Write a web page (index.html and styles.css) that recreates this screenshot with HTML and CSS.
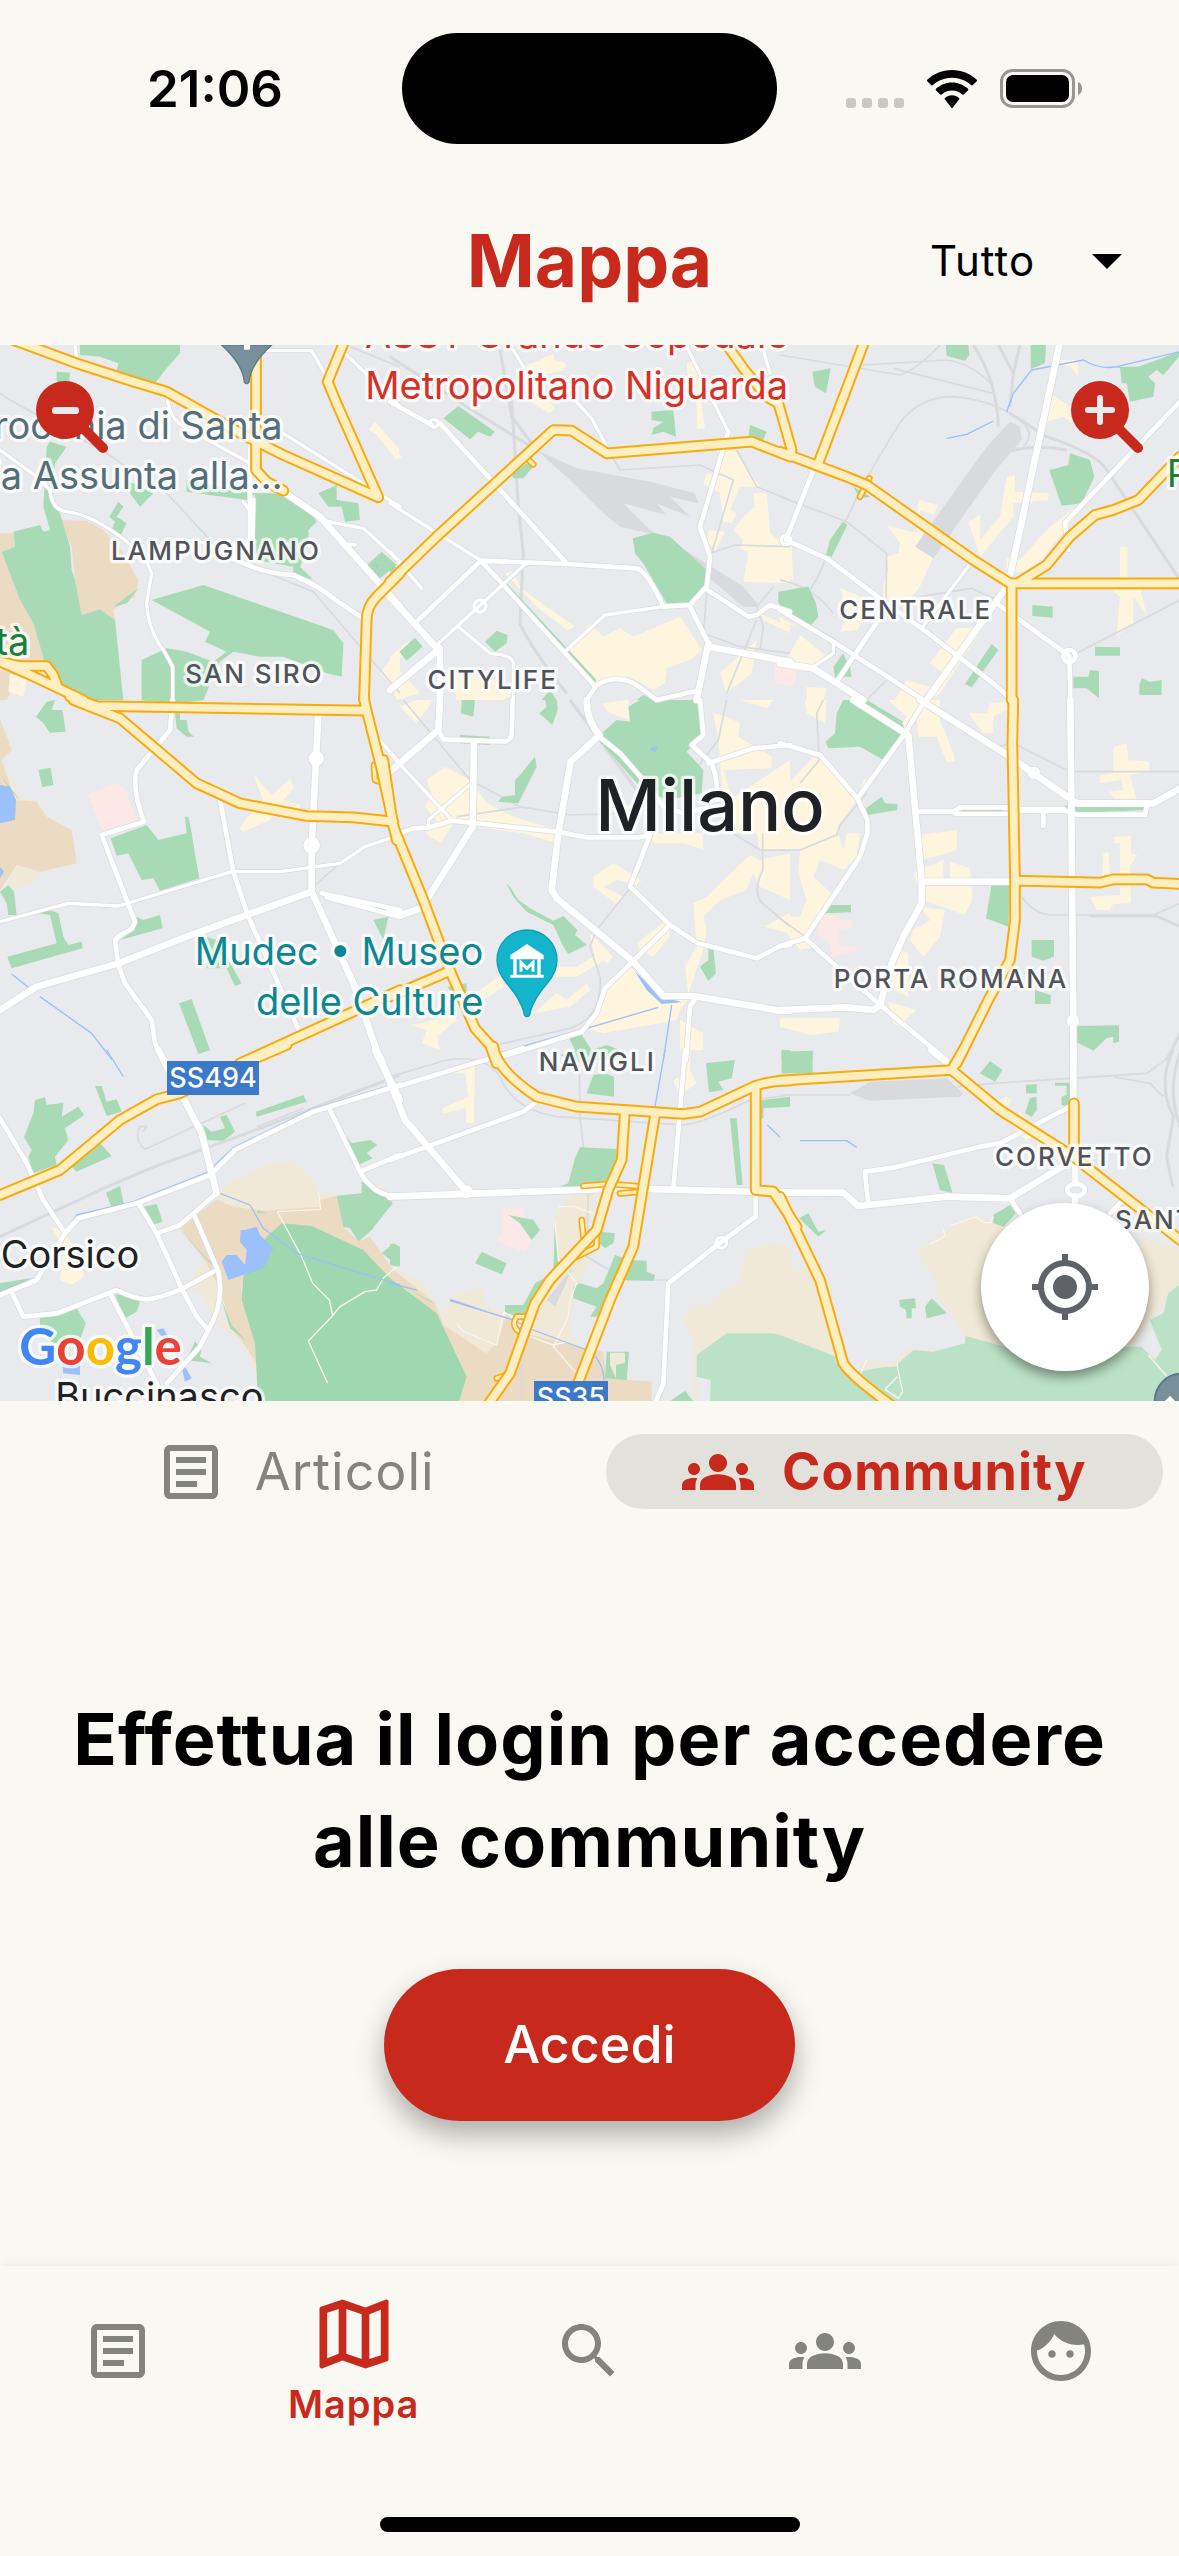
FILE: index.html
```html
<!DOCTYPE html>
<html lang="it">
<head>
<meta charset="utf-8">
<meta name="viewport" content="width=device-width, initial-scale=1">
<title>Mappa</title>
<link rel="stylesheet" href="styles.css">
</head>
<body>
<svg class="sprite" aria-hidden="true">
  <symbol id="i-article" viewBox="0 0 24 24"><path d="M19 5v14H5V5h14m0-2H5c-1.100 0-2 .9-2 2v14c0 1.100.9 2 2 2h14c1.100 0 2-.9 2-2V5c0-1.100-.9-2-2-2z"/><path d="M14 17H7v-2h7v2zm3-4H7v-2h10v2zm0-4H7V7h10v2z"/></symbol>
  <symbol id="i-map" viewBox="0 0 24 24"><path d="M20.500 3l-.16.030L15 5.100 9 3 3.360 4.900c-.21.070-.36.250-.36.480V20.500c0 .28.220.5.500.5l.16-.03L9 18.900l6 2.100 5.640-1.900c.21-.07.360-.25.360-.48V3.500c0-.28-.22-.5-.5-.5zM10 5.470l4 1.400v11.660l-4-1.400V5.470zm-5 .99l3-1.010v11.700l-3 1.160V6.460zm14 11.080l-3 1.010V6.860l3-1.160v11.840z"/></symbol>
  <symbol id="i-search" viewBox="0 0 24 24"><path d="M15.500 14h-.79l-.28-.27C15.410 12.590 16 11.110 16 9.500 16 5.910 13.090 3 9.500 3S3 5.910 3 9.500 5.910 16 9.500 16c1.610 0 3.090-.59 4.230-1.570l.27.28v.79l5 4.990L20.490 19l-4.990-5zm-6 0C7.010 14 5 11.990 5 9.500S7.010 5 9.500 5 14 7.010 14 9.500 11.990 14 9.500 14z"/></symbol>
  <symbol id="i-groups" viewBox="0 0 24 24"><path d="M12 12.750c1.630 0 3.070.39 4.240.9 1.080.48 1.760 1.560 1.760 2.730V18H6v-1.610c0-1.180.68-2.260 1.760-2.730 1.170-.52 2.610-.91 4.240-.91zM4 13c1.100 0 2-.9 2-2s-.9-2-2-2-2 .9-2 2 .9 2 2 2zm1.130 1.100c-.37-.06-.74-.1-1.130-.1-.99 0-1.930.21-2.780.58C.48 14.900 0 15.620 0 16.430V18h4.500v-1.610c0-.83.23-1.610.63-2.290zM20 13c1.100 0 2-.9 2-2s-.9-2-2-2-2 .9-2 2 .9 2 2 2zm4 3.430c0-.81-.48-1.530-1.220-1.850-.85-.37-1.790-.58-2.780-.58-.39 0-.76.040-1.130.1.400.68.630 1.460.63 2.290V18H24v-1.570zM12 6c1.660 0 3 1.340 3 3s-1.340 3-3 3-3-1.340-3-3 1.340-3 3-3z"/></symbol>
  <symbol id="i-face" viewBox="0 0 24 24"><path d="M10.250 13c0 .69-.56 1.250-1.250 1.250S7.750 13.690 7.750 13s.56-1.250 1.250-1.250 1.250.56 1.250 1.250zM15 11.750c-.69 0-1.250.56-1.250 1.250s.56 1.250 1.250 1.250 1.250-.56 1.250-1.250-.56-1.250-1.250-1.250zm7 .25c0 5.520-4.480 10-10 10S2 17.520 2 12 6.480 2 12 2s10 4.480 10 10zm-2 0c0-.78-.12-1.530-.33-2.240-.7.150-1.420.24-2.170.24-3.130 0-5.920-1.440-7.760-3.690C8.690 8.870 6.600 10.880 4 11.860c.01.040 0 .09 0 .14 0 4.410 3.590 8 8 8s8-3.590 8-8z"/></symbol>
</svg>

<div class="status">
  <div class="status-left"><time class="clock">21:06</time></div>
  <div class="island"></div>
  <div class="status-right">
    <span class="dots"><i></i><i></i><i></i><i></i></span>
    <svg class="wifi" viewBox="0 0 50 38" aria-hidden="true">
      <path d="M25 0C15.500 0 6.800 3.600.5 9.600a1.200 1.200 0 0 0 0 1.800l3.700 3.700c.5.5 1.200.5 1.700 0C10.900 10.500 17.600 7.700 25 7.700s14.100 2.800 19.100 7.400c.5.5 1.200.5 1.700 0l3.700-3.700a1.200 1.200 0 0 0 0-1.800C43.200 3.600 34.500 0 25 0z"/>
      <path d="M25 12.600c-6.100 0-11.700 2.400-15.900 6.200a1.200 1.200 0 0 0 0 1.800l3.800 3.700c.5.500 1.200.5 1.700.1 2.800-2.500 6.400-4 10.400-4s7.600 1.500 10.400 4c.5.400 1.200.4 1.700-.1l3.800-3.700a1.200 1.200 0 0 0 0-1.800c-4.200-3.800-9.800-6.200-15.900-6.200z"/>
      <path d="M25 25.300c-2.700 0-5.100 1-7 2.600-.5.500-.5 1.200 0 1.700l6.200 7.900c.4.500 1.200.5 1.600 0l6.200-7.900c.5-.5.500-1.200 0-1.700-1.900-1.600-4.300-2.600-7-2.600z"/>
    </svg>
    <svg class="battery" viewBox="0 0 83 39" aria-hidden="true">
      <rect x="1.500" y="1.500" width="72" height="36" rx="11" fill="none" stroke="#979691" stroke-width="3"/>
      <rect x="6" y="6" width="63" height="27" rx="7"/>
      <path d="M78 13c3 1 4 4 4 6.500S81 25 78 26z" fill="#979691"/>
    </svg>
  </div>
</div>

<header class="header">
  <h1 class="title">Mappa</h1>
  <div class="filter">
    <select class="filter-select" aria-label="Filtro"><option>Tutto</option></select>
    <svg class="filter-arrow" viewBox="0 0 30 15" aria-hidden="true"><path d="M0 0h30L15 15z"/></svg>
  </div>
</header>

<section class="map" aria-label="Mappa di Milano">
<svg class="map-canvas" viewBox="0 0 3537 3168" preserveAspectRatio="xMidYMid slice">
  <defs>
    <g id="roads">
      <g transform="translate(0 -15)">
        <path class="r1" d="M0 330L110 410L150 450Q155 510 200 515Q280 525 380 605L440 665L455 700L440 790Q445 870 490 930L518 980V1080M225 15L230 60M800 32H935L985 120M1035 40L1200 200M500 160Q505 240 560 265L750 370M850 280L1200 500M500 625Q560 590 620 610L700 660M960 540L1090 565L1200 665M1000 570L1030 610L1065 615M730 485L748 510"/>
        <path class="r2" d="M750 300V660M760 480L755 660M700 655Q780 700 880 705Q960 740 1000 775L1090 835"/>
        <path class="r3" d="M850 455L960 530L1200 800"/>
      </g>
      <g transform="translate(1170 -15)">
        <path class="r1" d="M0 490L270 660M545 170L605 235L655 330M370 30L400 80M820 800L645 825L530 930M410 668L140 915M205 860L300 940Q370 945 370 970V1080M0 635L95 745M890 20L1015 275M1120 30L1140 100"/>
        <path class="r2" d="M0 185L125 255M150 250L530 670M270 662L530 672L740 685Q770 690 820 800L900 795L945 745L1075 830L1100 825L1140 795L1200 815M1015 275L930 560L960 650L950 745M270 665L80 845M275 665L340 735L612 1035M900 800L955 910M590 1080L620 1035Q680 1000 740 1035L800 1080L930 1050"/>
        <path class="r3" d="M0 770L150 935V1080M150 925L0 1050M955 910L920 1080M955 920L1200 965"/>
        <circle class="r1" cx="270" cy="798" r="18"/><circle class="r1" cx="132" cy="250" r="12"/><circle class="r1" cx="1188" cy="600" r="14"/>
      </g>
      <g transform="translate(2340 -15)">
        <path class="r1" d="M160 910V940L100 980M568 675L425 865"/>
        <path class="r2" d="M100 390L18 600L140 655L320 790L425 865L640 1030L690 1075M1200 185L855 548L865 630M650 790L868 948L871 1080M295 840L170 1025M0 810L160 905L430 1080"/>
        <path class="r3" d="M838 15L692 700M680 740L440 1080M0 970L100 985L250 1080"/>
        <circle class="r2" cx="868" cy="948" r="18"/>
      </g>
      <g transform="translate(0 1065)">
        <path class="r1" d="M0 665L205 610L355 618L695 515H840L1020 490L1095 440L1200 405M1130 110L1200 190"/>
        <path class="r2" d="M518 0L510 90L410 210Q395 270 432 365L305 405L405 665Q400 690 360 705L345 720L355 795L375 850L455 960L465 1030L490 1080M660 300L700 515L745 650L830 840L905 1010M965 580L1200 630M980 592L1200 650"/>
        <path class="r3" d="M955 40L935 440V575L1060 850L1140 1080M0 930L110 860L355 790L560 710L740 645L935 575"/>
        <circle class="r2" cx="949" cy="175" r="16"/><circle class="r2" cx="935" cy="436" r="18"/>
      </g>
      <g transform="translate(1170 1065)">
        <path class="r1" d="M0 160L185 360M245 250L115 360V385"/>
        <path class="r2" d="M145 90L160 118L345 125Q365 120 365 100L368 0M30 400L70 385L120 382L185 362L500 395L590 412L750 412L780 405L720 560L840 675L920 728L1100 775L1170 738L1200 735M628 110L690 160L760 240L820 320L880 340L960 320M930 0L940 105L905 135L965 190Q985 240 980 300M955 190L1090 145L1200 135M840 675L645 865L620 940L575 995L320 1075M920 890L900 920L888 1080"/>
        <path class="r3" d="M150 0L145 90L0 215M252 130L248 380L110 600M0 630L35 645L90 625M590 0Q590 60 628 105L542 185L505 400L485 570L500 595L730 785L820 888L910 888L1170 932H1200"/>
      </g>
      <g transform="translate(2340 1065)">
        <path class="r2" d="M0 130L120 165L232 295L262 360V400L240 470L75 715L0 738M435 0L375 100L232 295M75 715L300 915L500 1080M420 335H520L540 322H690M520 335L530 342H690M850 330L890 344H1095L1100 320M790 340V378"/>
        <path class="r3" d="M220 0L385 105L425 540V610L370 710L335 790L300 915L280 930L200 922L0 930M420 0L690 170L760 220L890 310H1120L1200 265M715 330H850M430 545H700M871 0L880 960V1080"/>
        <circle class="r1" cx="762" cy="219" r="14"/><circle class="r2" cx="879" cy="962" r="12"/>
      </g>
      <g transform="translate(0 2115)">
        <path class="r2" d="M0 205L75 330L130 450L195 550M0 735L110 690L195 550L235 505L410 460L630 375L705 300L940 185L1200 105M650 430L540 525L470 550L415 460M470 550L545 715L590 800L625 840M585 500L655 665Q675 760 620 850L600 890L500 1000M35 725L70 800L170 790L350 720Q400 745 440 748Q480 745 550 715L640 665M335 740L470 1000L490 1053M990 180L1080 365Q1120 440 1200 440M1080 365L1200 315"/>
        <path class="r3" d="M475 0L605 250L650 430M1125 0L1200 150"/>
      </g>
      <g transform="translate(1170 2115)">
        <path class="r2" d="M20 110L400 -5M0 330L235 245L400 185L440 155M885 0L850 420M1097 425V500L995 575L835 700L820 1000L795 1060"/>
        <path class="r3" d="M-30 20L45 210L230 425M0 440L560 420L700 415L1200 428"/>
        <circle class="r1" cx="994" cy="578" r="16"/><circle class="r1" cx="230" cy="425" r="14"/>
      </g>
      <g transform="translate(2340 2115)">
        <path class="r2" d="M690 445L720 490M265 465L255 365L345 352L600 290L660 280L880 165M450 0L510 50M1030 450L990 490"/>
        <path class="r3" d="M0 428H190L235 468L500 440L690 445L855 345M880 0V160M885 310V400M885 440V480"/>
        <ellipse class="r2" cx="888" cy="420" rx="26" ry="18"/>
      </g>
    </g>
    <g id="highways">
      <path transform="translate(0 -15)" d="M40 0L230 70L400 125L500 155L740 290L850 345L1135 472L1010 190L983 125L1010 60L1035 0M768 0V390L800 425L850 452M1200 700L1130 770Q1100 800 1100 840L1092 1080M0 965L80 1000L250 1080M0 965L60 978H140L160 1005L175 1045"/>
      <path transform="translate(1170 -15)" d="M0 725L140 590L490 270L545 272L650 340L1085 305L1200 350M1000 0L1060 85L1130 170L1165 190L1205 330"/>
      <path transform="translate(2340 -15)" d="M255 0L115 370M0 335L200 410L260 435L580 660L690 730L1200 730M695 730V1080M720 725L800 675L870 590L945 525L1000 510L1075 480L1200 350"/>
      <path transform="translate(0 1065)" d="M210 -10L290 18L1100 32L1145 210L1190 420M1092 -5L1100 32M220 0L360 55L590 250L720 310L920 348L1060 352L1180 365M720 1090L1060 935L1200 870"/>
      <path transform="translate(1170 1065)" d="M-20 180L10 380L100 600L175 800L255 985L300 1035L320 1090M0 890L175 815"/>
      <path transform="translate(2340 1065)" d="M700 0L697 130L705 540V660L690 780L625 900L530 1090M705 542L960 548L1000 538H1100L1120 548L1200 552"/>
      <path transform="translate(0 2115)" d="M0 435L180 360L360 210L470 148L540 130L720 45L860 -15"/>
      <path transform="translate(1170 2115)" d="M310 -10Q320 60 440 140L560 170L880 192L930 185L1095 108Q1140 92 1200 92M1097 108V420L1150 425L1220 530M705 180L695 330L655 420L620 540L480 690L435 760L360 970L290 1070M795 195L730 590L660 750L560 1010"/>
      <path transform="translate(2340 2115)" d="M0 92L515 60L550 0M515 60L660 180L880 320L1200 570M882 160V310M0 440L120 690L190 940Q215 980 340 1070"/>
    </g>
    <g id="ramps">
      <path transform="translate(1170 2115)" d="M575 510L580 560M560 620L620 590V560M395 850Q360 830 380 800H410M320 985L350 975M580 408L655 402L760 410M690 430L760 425"/>
      <path transform="translate(1170 -15)" d="M405 350L430 373"/>
      <path transform="translate(2340 -15)" d="M268 415L240 470"/>
      <path transform="translate(0 1065)" d="M1122 195L1125 240L1155 250L1160 200Z"/>
    </g>
  </defs>

  <rect class="ground" width="3537" height="3168"/>

  <g class="sand-light">
    <path transform="translate(0 2115)" d="M655 430L680 400L800 345L880 335L950 400L955 430L1010 437L1000 490H760L650 450ZM560 710L610 640L650 660L665 750L660 815L740 890L700 860L645 815L610 740ZM650 810L745 900L775 1000V930L735 870L690 820ZM1110 420L1135 400L1178 440Z"/>
    <path transform="translate(1170 2115)" d="M880 815L905 765H960L1000 720L1050 695L1070 600L1150 580L1200 590L1205 665L1265 640L1320 700L1345 920L1170 855H1010L920 915L925 1060H910V865ZM540 435L610 430L590 560L560 600L600 620L540 800V860L600 905L400 850L370 790L480 700L500 660L495 500ZM175 740L280 712L285 770L350 790L370 850L300 940L160 820ZM0 650L90 690L165 800L200 830H140L0 690Z"/>
    <path transform="translate(2340 2115)" d="M410 605L500 540L580 497L640 510L750 540L720 900L555 860L520 800L475 750L470 700ZM1085 560L1197 600V705L1110 810L1060 890H1000Z"/>
    <path transform="translate(0 1065)" d="M5 180L60 290L110 305L140 350L215 390L100 400L30 300ZM40 495L120 515L100 550L25 570Z"/>
  </g>
  <g class="sand">
    <path transform="translate(0 -15)" d="M180 540L260 542L310 570L370 640L415 720L405 770L340 810L345 840L300 808L245 825L225 720L215 620ZM0 580H40L45 620L5 635L60 780L100 850L135 970L0 965ZM0 990L60 1000L20 1080H0Z"/>
    <path transform="translate(0 1065)" d="M0 60L25 120L35 150L5 180L45 300L110 305L140 350L215 390L230 490L120 515L50 495L0 570Z"/>
    <path transform="translate(0 2115)" d="M540 535L650 448L700 470L790 482L960 470V450L1010 437L1035 535L1075 575L1110 560L1200 690V750L1090 620H845L725 700V750L765 880L770 940L690 820L660 720L620 640Z"/>
    <path transform="translate(1170 2115)" d="M0 650L135 760L160 825L290 910L320 880L350 790L400 850L640 905L650 985L785 995V1060H200L130 790L0 700Z"/>
  </g>
  <g class="shops">
    <path transform="translate(0 -15)" d="M1105 270L1125 245L1200 330L1190 360L1130 285ZM1140 1000L1200 925V1060ZM30 1000L80 1020L70 1070L25 1055Z"/>
    <path transform="translate(1170 -15)" d="M400 80L490 42L495 60L530 70L520 90L440 110L460 160L495 205L480 220L430 190L400 130ZM890 70L915 60L945 265L920 268V190L895 120ZM985 330H1035L1110 440L1050 440L1020 510L1040 520L1025 550L1000 545L990 460L940 430L950 400L985 410ZM1030 570L1060 530L1095 500L1090 460L1130 460L1140 580L1165 600H1200V730L1060 725L1075 640L1050 625L1060 600ZM955 570L1005 575L975 635L955 610ZM345 700L365 695L400 750L555 860L530 870L440 800ZM530 930L600 850L640 890L690 865L730 890L870 830L935 930L900 960L830 985L825 1030L790 1050L720 1010L620 1030L560 980ZM990 1000L1100 900L1085 1000L1010 1060ZM1110 820L1200 860V880L1120 840ZM0 950L60 900L20 980L90 1060L20 1080L0 1020ZM180 1000L300 1010L380 1060L340 1080H200ZM0 300L35 350L20 360L0 330Z"/>
    <path transform="translate(2340 -15)" d="M320 555L410 580L415 480L475 495L460 525L420 510L430 610L460 650L420 740L380 790L310 800V735L325 690L320 650L355 640L360 610ZM565 545L600 525V600L660 530L680 410L705 405V455L805 460V480L700 490V530L600 650ZM800 220L820 165L870 200L875 250L850 230L800 245ZM840 60L895 60V110L870 80L835 70ZM880 505L885 530L760 690L680 700V655L720 660L800 570ZM1020 620H1043V745H1080L1100 825L1060 770V850L1010 888L1020 770L995 750L1020 735ZM450 970L530 865L600 860L650 800L480 1060L450 1080L490 1000ZM180 745L230 765L280 800L230 870L180 875L205 820ZM0 620H35L40 720H0ZM0 830L50 860L0 850ZM60 885L135 945L100 975L20 960ZM345 1080L380 1020L450 1040L420 1080ZM80 1040L140 1045L130 1080H80Z"/>
    <path transform="translate(0 1065)" d="M760 225L815 285L870 238L882 265L850 300L900 315V335L830 330L810 360L730 395L717 385L745 350L790 300Z"/>
    <path transform="translate(1170 1065)" d="M110 240L165 200L240 240L290 310L370 350L500 390V430L400 400L190 370L150 430L105 400L140 360L105 320L125 280ZM30 20L80 0H130L80 70ZM635 10L715 0L720 60L660 40ZM970 40L1010 50L1050 70L1045 110L1145 170V205L1000 210L1030 310L1000 300L985 120ZM1050 0H1150L1130 25ZM610 530L670 490L755 540L740 555L680 540L640 560L700 590L680 612L610 560ZM910 610L950 590L1000 540L1080 465L1110 480L1200 460V600L1110 560L1090 520L1070 570L990 600L940 650L950 690L940 750L895 880L885 800L920 740ZM600 700L670 770L650 790L610 760ZM740 730L830 660L840 710L790 770L750 750ZM645 865L720 800L820 890H900L870 930L860 960L640 1000L590 985L620 940ZM780 400H940V450L880 430L790 430ZM660 290L720 320L700 350L650 310ZM1020 300L1200 180V450L1110 450L1100 400H1030ZM1120 680L1200 640V700ZM60 975L180 950L190 930L200 960L140 1010L150 1050L95 1030L110 990ZM300 850L340 820V860L280 900L240 890ZM430 940L500 880L530 900L590 850L600 870L540 920ZM480 800L560 800L640 750L660 770L560 830L500 830ZM870 960L940 1000V1050H870Z"/>
    <path transform="translate(2340 1065)" d="M35 240L100 170L125 180L230 300L180 370L175 400L190 450L200 400H240L230 470L190 510L170 500L120 480L100 530L155 580L80 700H40L0 650H60L80 600L55 520L60 450H0V250ZM245 300L230 290L255 230L262 260ZM420 405L530 390V450L430 480ZM400 520L490 480V535H510V485L570 505L578 595L555 645L430 600ZM400 690L450 660L420 620L495 630L480 710L430 770L390 720ZM325 0H480V60L520 160L525 185H500L470 110L415 110L410 60L350 100L380 50ZM75 0H140L135 70L80 40ZM565 40L620 40L630 10L680 5V30L640 50V100L610 100ZM1000 140L1040 130L1045 180L1110 185L1105 215L1050 225L1070 300H1010L985 275L1030 270L1025 240L960 250V225L1000 220ZM1003 410L1053 408V460L1072 465L1050 500L1053 610L1000 612L990 630H950L930 590L1020 585V430H1003ZM970 460L985 455L990 525H967ZM0 955H180L175 995L90 1005L0 980ZM325 905L410 930L375 960L390 990L340 970ZM335 850L360 750L385 760V890L340 870ZM20 700L75 690L110 740L60 750Z"/>
    <path transform="translate(0 2115)" d="M155 530L195 550L250 640V680L215 705L180 690L190 600Z"/>
    <path transform="translate(1170 2115)" d="M190 70L255 35L252 220H228V175L160 190L158 175L235 140L225 70ZM880 0H900V60L920 100L870 135L850 90L870 80Z"/>
    <path transform="translate(2340 2115)" d="M660 150L680 138L695 155L680 175ZM720 180L755 260L740 272L705 235Z"/>
  </g>
  <g class="hospital">
    <path transform="translate(0 1065)" d="M262 283L350 250L378 270L412 365L308 397Z"/>
    <path transform="translate(2340 -15)" d="M-15 970L50 985L45 1040L-15 1030Z"/>
    <path transform="translate(2340 1065)" d="M120 645H165L185 660H218V680L175 690L180 740H228V755L155 770L150 730L110 700Z"/>
    <path transform="translate(1170 2115)" d="M335 478L400 475L405 505L370 500L425 570L405 605L318 575L335 550Z"/>
  </g>
  <g class="rail">
    <path class="yard" transform="translate(1170 -15)" d="M440 330L560 385L780 425L915 460L925 490L840 470L900 530L800 490L830 525L700 490L780 570L900 640L1060 740L1110 800L1060 800L930 690L820 590L690 560L640 520L540 420Z"/>
    <path class="yard" transform="translate(2340 -15)" d="M690 245L720 260L725 300L640 400L460 655L405 620L620 320Z"/>
    <path class="yard" transform="translate(2340 2115)" d="M210 130L270 95L500 85L550 130L540 140L270 152Z"/>
    <path class="yard" transform="translate(1170 2115)" d="M470 750L550 650L495 770Z"/>
    <path class="wide" transform="translate(1170 -15)" d="M330 30L365 230L440 330M365 180L385 500L400 640L390 850Q420 920 530 1060M0 50L230 200L440 330"/>
    <path transform="translate(1170 -15)" d="M655 330L690 390L930 375L1030 420L965 640M1040 330L1100 440L1200 480M960 640L1035 615L1200 620M960 650L940 880L1050 920L1200 940M1100 800L1120 860L1110 930M1150 740L1100 800M1100 840L1010 1060"/>
    <path class="wide" transform="translate(2340 -15)" d="M580 15Q650 120 655 260M655 15L700 100L690 200M720 15L700 100M690 220L800 290Q950 340 980 390L1200 720M670 340Q750 310 860 330"/>
    <path transform="translate(2340 -15)" d="M0 45L360 105Q410 90 480 15M250 75L500 60Q580 70 640 140M150 645L250 430L340 280Q400 170 520 170Q640 180 720 240Q770 280 730 320M0 470L200 545L320 640L318 790M420 770L575 745L650 780M870 950L1200 780M0 720Q100 740 160 820M0 800Q80 810 140 650M320 1020L260 1080M340 85L640 160"/>
    <path transform="translate(0 -15)" d="M0 160L30 180L320 340L500 460L640 610M780 690L940 755L1200 1060M1050 20L1200 80"/>
    <path transform="translate(0 1065)" d="M940 560L1020 490"/>
    <path transform="translate(1170 1065)" d="M40 0L240 240L390 320L540 345L700 340M200 350L390 322M720 565L620 690L600 740L630 830Q640 950 540 985L320 1035M1010 0L985 120L900 230M1030 400L1110 450H1200M1118 400V510Q1080 590 1130 620L1200 680"/>
    <path class="wide" transform="translate(1170 1065)" d="M540 0L740 270"/>
    <path transform="translate(2340 1065)" d="M650 140L700 130L870 215H1200M725 590Q760 640 810 645H1120L1200 610M130 0L110 40L118 180L60 250M0 450H60L170 405L180 375L260 280M0 655L75 710"/>
    <path class="wide" transform="translate(2340 1065)" d="M930 648H1130L1200 680M1200 1000L1160 1080"/>
    <path class="wide" transform="translate(0 2115)" d="M0 560L300 420L450 355L740 250L1200 75"/>
    <path transform="translate(0 2115)" d="M735 160L435 298Q400 270 420 230H440L430 245M770 230L910 175"/>
    <path transform="translate(1170 2115)" d="M0 80L170 30Q300 10 340 100Q380 180 500 200L880 225Q940 220 1080 150L1200 135M568 0L570 200L595 420L590 620L710 690H835M395 850V1060"/>
    <path transform="translate(2340 2115)" d="M0 135H210M530 110L640 100L1100 70L1170 20M1000 80L1110 100L1150 140"/>
    <path class="wide" transform="translate(2340 2115)" d="M1180 0Q1130 100 1180 200L1160 320L1178 410M1200 10Q1160 120 1200 230"/>
  </g>
  <g class="green">
    <path transform="translate(0 -15)" d="M240 15H540V40L500 85L465 130L350 95L355 70L300 50L240 45ZM170 95L210 98L208 130L170 125ZM140 320L150 305L200 320L165 370L160 440L150 480L180 520L210 620L215 690L225 720L245 825L300 808L345 840L370 1080H250L180 1040L135 970L100 850L60 780L5 635L45 620L40 575L120 555L130 575L150 570L130 500ZM455 780L610 735L1000 870L1030 910L1025 1010L980 1000L850 950H780L700 935L660 965L610 1080H425V960L500 925L560 935L640 965L680 935L615 905L630 875ZM355 485L370 500L350 530L380 550L360 590L335 570L345 545L328 530ZM765 460H860L930 510L950 545L925 570V620L900 680L940 720L880 700V680L765 660ZM380 420L460 460L420 500L390 460ZM560 420L770 460L740 480L560 455ZM955 460L1010 435V480L1075 490L1080 540L1035 545L1025 500L985 500ZM1145 635L1190 675L1140 715L1095 680ZM340 800L415 745L380 790Z"/>
    <path transform="translate(1170 -15)" d="M160 235L205 198L315 275L300 290L265 275L240 298ZM365 405L410 370L430 380L400 415H370ZM728 595L790 578L840 590L950 690V735L900 795L830 790L760 670L735 640ZM785 215L850 210L858 290L820 275L785 285L790 265L820 245L785 240ZM1080 255L1130 275L1120 300L1075 295ZM350 730L620 1020L610 1035L340 745ZM285 905L320 872L352 885L350 910L315 935ZM28 935L75 893L98 920L50 962ZM0 660L20 685L0 700ZM1165 755H1200V810L1165 790ZM455 1080L480 1050L500 1080ZM740 1080L760 1065L790 1080Z"/>
    <path transform="translate(2340 -15)" d="M497 15H565L568 45L555 62L500 48ZM752 15H798L795 70L752 88ZM97 95L152 85L138 160L105 140ZM985 80L1075 80L1197 35V50L1150 105L1130 90L1105 110L1125 130L1120 170L1050 185L1040 130H1025L1020 85ZM808 390L865 375L870 340L930 360L943 410L905 490L845 497ZM0 755L50 745L85 740L108 790L115 830L90 860L60 840L0 805ZM188 545L202 555L155 650L138 645L150 600ZM220 440L270 470L240 475ZM757 795L818 800V833L757 828ZM945 920L1020 922V947H945ZM880 1010H925L930 990L957 993V1075L920 1045H880ZM1085 1015L1110 1025L1145 1020V1065H1078V1035ZM635 912L655 930L575 1042L555 1032ZM190 940L210 985L215 1010L165 1010L160 980ZM100 860L170 900L160 910Z"/>
    <path transform="translate(0 1065)" d="M140 5L165 0L155 30H187L197 95L150 98L130 70L108 50ZM115 210L152 203L160 255L127 262ZM332 415L440 375L475 420L560 400L555 350H565L575 400L588 480L598 535L480 572L460 535L425 540L385 460L350 467ZM0 575L25 555L42 575L50 645H25L20 610ZM115 640L150 630L175 640L190 710L205 735L245 725L248 745L35 805L22 770L170 730L150 645ZM360 720L405 690L410 650L430 660L480 645L488 685ZM537 910L575 897L630 1050L595 1062ZM525 40H540V60H560L565 95L582 110H560L530 85ZM1120 660L1165 650L1150 720ZM620 710L650 720L725 850L705 858L680 805H620ZM420 0H610L520 12ZM5 230L60 300L30 270Z"/>
    <path transform="translate(1170 1065)" d="M215 0H255L250 50L213 40ZM465 0H500L503 30L487 75L448 40L470 20ZM635 100L680 60L720 65L715 20L750 0H925L940 100L890 155L940 210L935 280L830 300L750 260L630 125ZM435 170L440 200L385 310L325 305L335 290L375 285V240L390 225ZM210 105L300 110V135L210 130ZM350 552L360 560L385 600L420 625L490 662L520 648L562 690L555 705L590 735L535 762L520 740L490 675L410 635L370 590ZM955 745L970 745L978 820L955 843L930 800L955 780ZM535 1010L575 1005L605 1050L650 1035L690 1050V1080H570ZM172 860L230 850V875L180 870ZM1175 1055H1200V1080H1175Z"/>
    <path transform="translate(2340 1065)" d="M190 0H230L370 75L375 105L310 180L240 140L145 145L137 125L165 100L170 40ZM260 0L370 65L360 75L250 10ZM258 325L305 290L315 310L352 312V330L262 345ZM635 552H690L685 680L618 655ZM755 720H822V770L790 782L755 770ZM765 870L812 885V912H765ZM888 978L1017 976V1025L1000 1030V1010L980 1015L940 1052L888 1025ZM545 325H670V338H545ZM850 325L880 300L910 318H1100L1095 330L870 340ZM150 615H213V637L135 640ZM5 1055L98 1052V1080H5ZM480 815L510 800L545 850L510 870Z"/>
    <path transform="translate(0 2115)" d="M105 150L135 142L140 165L190 158L185 200L235 170L252 195L195 235L205 270L165 320L170 345L100 370L85 320L95 300L72 262L100 190ZM285 108H305L320 155L350 148L365 185L320 198ZM215 350L300 280L335 318L230 365ZM590 0H630L600 10ZM610 225L635 245L675 235L660 200L680 195L705 245L670 272L620 270ZM768 185L910 135L920 155L770 200ZM318 428L360 408L372 465L335 473ZM430 470L470 462L488 515L455 525ZM0 700L90 685L50 710L0 730ZM120 805L230 775L257 820L240 870L160 880L120 840ZM345 735L385 728L420 755L410 785L375 805ZM1040 260L1055 280L1110 270L1132 285L1100 310L1118 325L1075 345ZM1010 437L1085 430V395L1150 425L1178 460L1115 540L1075 575L1050 535L1030 530ZM585 875L605 895L600 920L635 940L560 930ZM1145 610L1180 580L1200 590V650ZM540 540L640 645L630 640ZM665 750L695 825L740 875L690 835ZM775 480L800 490L770 490Z"/>
    <path transform="translate(1170 2115)" d="M570 292L680 297V350L640 405L508 410L535 400L555 325ZM645 70L672 80V140L590 130L610 75ZM510 15L560 0H650L600 40L560 35ZM948 40L1035 30L1025 85L985 95L1000 120L957 127ZM1115 150L1200 140V170L1120 175V205H1112ZM1175 0H1200V70H1175ZM1020 205H1040L1058 405H1040ZM355 495L430 510L450 540L425 570L390 520ZM275 605L350 640L335 673L255 640ZM0 580L28 605L25 650L0 645ZM0 450L8 460L0 470ZM630 545L675 550L670 580L645 595L628 580ZM495 510L505 640L435 760L405 800L345 790V765H400L435 700L490 670ZM550 710L570 700L620 715L640 700L675 615L715 630L770 632V665L795 675L790 692L705 690L620 800L600 800L620 770L550 745ZM650 905H717L710 990L645 985ZM845 1050L885 1022L915 1060H840ZM60 720L135 760L120 755Z"/>
    <path transform="translate(2340 2115)" d="M600 70L630 33L667 60L645 95ZM738 105L770 102V130L738 130ZM735 190L750 145L770 140V180L755 200ZM825 98H872V170L845 165V140L860 135V107H825ZM457 340L492 345L518 430L480 420ZM58 505L85 490L115 545L140 540L115 560ZM640 495L690 465L707 490L670 530L640 520ZM358 750L405 745L408 775H395V805H380L378 780L360 770ZM435 770L455 745L500 790L440 805ZM10 5H98V70H10Z"/>
  </g>
  <path class="park-dark" transform="translate(0 2115)" d="M845 520L935 528L1090 600L1170 685L1310 790L1400 980L1375 1060H775L765 880L725 750L730 680L800 560Z"/>
  <path class="park-light" transform="translate(2340 2115)" d="M-250 915L-160 850H-20L0 855L170 920L210 970L340 945L400 900L460 905L555 880V857L690 895L1085 890L1125 930L1145 900L1110 810L1150 790L1165 730L1197 705V1060H-210L-208 990L-250 980Z"/>
  <g class="sand-light">
    <path transform="translate(2340 2115)" d="M235 955L265 925L330 945L385 893L400 900L345 950Z"/>
    <path transform="translate(1170 2115)" d="M660 908H705V938L678 945V985L660 945Z"/>
  </g>
  <g class="trails">
    <path transform="translate(0 2115)" d="M955 425L962 478L832 485L905 620L938 700L988 750L998 797L925 873L983 1000M998 797L1020 770L1095 725L1130 720L1150 685L1190 650"/>
    <path transform="translate(1170 2115)" d="M505 470H550L610 490M495 515L505 630L560 700L540 750L535 800L490 890L555 965M200 820L220 845L320 885L342 785L370 805M420 860L490 885L535 875"/>
    <path transform="translate(2340 2115)" d="M510 527L590 500L610 518H632L640 500M490 538L495 558L450 583M350 940L368 1025L355 1045L315 1018L352 980M240 975L260 930M1105 915L1160 978"/>
  </g>
  <g class="water">
    <path transform="translate(0 1065)" d="M0 255L30 260L48 300L45 360L0 370ZM0 500L12 515L0 535Z"/>
    <path transform="translate(0 2115)" d="M665 635L680 615L710 615L735 645L740 600L720 575L722 540L735 540L770 530L780 555L820 595L790 655L685 690ZM470 840L490 835L575 985L555 995L540 930ZM185 920L240 940V975L190 970Z"/>
    <path transform="translate(1170 1065)" d="M735 815L820 890L875 907L815 912L770 870ZM778 145L803 138L795 160Z"/>
    <path transform="translate(0 -15)" d="M1125 678L1138 672L1132 686Z"/>
  </g>
  <g class="streams">
    <path transform="translate(2340 -15)" d="M500 295L560 283L640 243M680 215L700 160L755 90L910 60Q960 90 1010 80L1200 35"/>
    <path transform="translate(1170 1065)" d="M590 985L805 922M845 915L820 1080M320 1062L570 990"/>
    <path transform="translate(0 1065)" d="M35 822L85 862M120 890L275 1000L337 1080"/>
    <path transform="translate(0 2115)" d="M660 430L750 465L790 535L890 610L1200 705M320 0L370 80M0 725L100 685M180 580L230 495L400 455L620 368L700 293L935 178L1190 100"/>
    <path transform="translate(1170 2115)" d="M825 0L795 170M180 752L370 810L430 840L590 900Q640 930 642 990M180 748L290 785M0 700L80 720M1132 225L1170 262"/>
    <path transform="translate(2340 2115)" d="M60 272H200L230 292"/>
  </g>

  <use href="#roads" class="road-edge"/>
  <use href="#roads" class="road-core"/>
  <use href="#ramps" class="ramp-edge"/>
  <use href="#ramps" class="ramp-core"/>
  <use href="#highways" class="highway-edge"/>
  <use href="#highways" class="highway-core"/>

  <g class="pins">
    <path d="M665 0H815Q750 60 747 112Q740 120 733 112Q730 60 665 0Z" fill="#78909c" stroke="#5b7a87" stroke-width="4"/>
    <rect x="732" y="-10" width="18" height="24" fill="#fff"/>
    <path d="M1581 2015Q1572 2015 1571 2000Q1560 1960 1520 1915Q1491 1880 1491 1845A90 90 0 0 1 1671 1845Q1671 1880 1642 1915Q1602 1960 1591 2000Q1590 2015 1581 2015Z" fill="#12b5cb" stroke="#129eaf" stroke-width="4"/>
    <path d="M1581 1797L1631 1830V1843H1622V1889H1631V1898H1531V1889H1540V1843H1531V1830ZM1550 1843V1889H1612V1843Z" fill="#fff" fill-rule="evenodd"/>
    <path d="M1563 1880V1852L1581 1870L1599 1852V1880" fill="none" stroke="#fff" stroke-width="9"/>
    <circle cx="3546" cy="3168" r="82" fill="#78909c" stroke="#5b7a87" stroke-width="6"/>
    <path d="M3495 3168L3510 3152L3525 3168Z" fill="#fff"/>
  </g>

  <g class="labels">
    <g class="poi red" text-anchor="middle"><text x="1730" y="10">ASST Grande Ospedale</text><text x="1730" y="163">Metropolitano Niguarda</text></g>
    <g class="poi slate" text-anchor="end"><text x="848" y="282">rocchia di Santa</text><text x="848" y="432">ria Assunta alla...</text></g>
    <text class="poi leaf" x="88" y="930" text-anchor="end">tà</text>
    <text class="poi leaf" x="3500" y="427">P</text>
    <g class="poi teal" text-anchor="end"><text x="1450" y="1860">Mudec • Museo</text><text x="1450" y="2010">delle Culture</text></g>
    <g class="district" text-anchor="middle">
      <text x="648" y="645">LAMPUGNANO</text><text x="763" y="1013">SAN SIRO</text><text x="1478" y="1033">CITYLIFE</text><text x="2747" y="823">CENTRALE</text><text x="2853" y="1930">PORTA ROMANA</text><text x="1792" y="2177">NAVIGLI</text><text x="3223" y="2462">CORVETTO</text><text x="3345" y="2653" text-anchor="start">SANT</text>
    </g>
    <text class="city" x="2130" y="1458" text-anchor="middle">Milano</text>
    <g class="town" text-anchor="middle"><text x="210" y="2770">Corsico</text><text x="478" y="3195">Buccinasco</text></g>
    <rect class="shield" x="501" y="2148" width="276" height="102"/>
    <rect class="shield" x="1602" y="3108" width="222" height="102"/>
    <g class="shield-text" text-anchor="middle"><text x="639" y="2226">SS494</text><text x="1713" y="3186">SS35</text></g>
    <text class="brand" x="58" y="3060"><tspan fill="#4285f4">G</tspan><tspan fill="#ea4335">o</tspan><tspan fill="#fbbc04">o</tspan><tspan fill="#4285f4">g</tspan><tspan fill="#34a853">l</tspan><tspan fill="#ea4335">e</tspan></text>
  </g>
</svg>
<button class="zoom zoom-out" type="button" aria-label="Riduci">
  <svg viewBox="0 0 72 72"><path fill-rule="evenodd" d="M29 0a29 29 0 1 0 0 58a29 29 0 1 0 0-58z"/><rect class="minus" x="16" y="26" width="27" height="7" rx="3"/><path class="handle" d="M47 47L67 67"/></svg>
</button>
<button class="zoom zoom-in" type="button" aria-label="Ingrandisci">
  <svg viewBox="0 0 72 72"><path fill-rule="evenodd" d="M29 0a29 29 0 1 0 0 58a29 29 0 1 0 0-58zM26 17a3 3 0 0 1 6 0v9h9a3 3 0 0 1 0 6h-9v9a3 3 0 0 1-6 0v-9h-9a3 3 0 0 1 0-6h9z"/><path class="handle" d="M47 47L67 67"/></svg>
</button>
<button class="locate" type="button" aria-label="La mia posizione">
  <svg viewBox="0 0 66 66"><circle cx="33" cy="33" r="24" fill="none" stroke="#5f6368" stroke-width="6"/><circle cx="33" cy="33" r="12" fill="#5f6368"/><path d="M33 0v9M33 57v9M0 33h9M57 33h9" stroke="#5f6368" stroke-width="6"/></svg>
</button>
</section>

<div class="tabs" role="tablist">
  <button class="tab" type="button" role="tab" aria-selected="false"><svg class="icon"><use href="#i-article"/></svg>Articoli</button>
  <button class="tab tab-active" type="button" role="tab" aria-selected="true"><svg class="icon"><use href="#i-groups"/></svg>Community</button>
</div>

<main class="prompt">
  <h2 class="prompt-text">Effettua il login per accedere alle community</h2>
  <button class="login" type="button">Accedi</button>
</main>

<footer class="bottom">
  <nav class="nav">
    <a class="nav-item" href="#articoli" aria-label="Articoli"><svg class="icon"><use href="#i-article"/></svg></a>
    <a class="nav-item nav-active" href="#mappa"><svg class="icon icon-large"><use href="#i-map"/></svg><span>Mappa</span></a>
    <a class="nav-item" href="#cerca" aria-label="Cerca"><svg class="icon"><use href="#i-search"/></svg></a>
    <a class="nav-item" href="#community" aria-label="Community"><svg class="icon"><use href="#i-groups"/></svg></a>
    <a class="nav-item" href="#profilo" aria-label="Profilo"><svg class="icon"><use href="#i-face"/></svg></a>
  </nav>
  <div class="home-indicator"></div>
</footer>
</body>
</html>
```
FILE: styles.css
```css
:root {
  --bg: #f9f8f2;
  --red: #c72a1c;
  --grey: #84847f;
  --tracking: 1px;
}

* { box-sizing: border-box; }

body {
  margin: 0;
  min-height: 100vh;
  display: flex;
  flex-direction: column;
  background: var(--bg);
  color: #000;
  font-family: Inter, "Liberation Sans", sans-serif;
}

button, select { font-family: inherit; border: 0; background: none; padding: 0; margin: 0; color: inherit; }
.sprite { display: none; }
.icon { width: 72px; height: 72px; fill: currentColor; flex: none; }
.icon-large { width: 92px; height: 92px; }

/* status bar */
.status {
  height: 177px;
  display: grid;
  grid-template-columns: 1fr 375px 1fr;
  align-items: center;
}
.status-left { padding-left: 28px; text-align: center; }
.clock { font-size: 51px; font-weight: 600; line-height: 60px; }
.island { height: 111px; border-radius: 56px; background: #000; }
.status-right { padding-right: 28px; display: flex; justify-content: center; align-items: center; gap: 23px; }
.dots { display: flex; gap: 6px; height: 38px; align-items: flex-end; }
.dots i { width: 10px; height: 10px; border-radius: 3px; background: #c8c7c2; }
.wifi { width: 50px; height: 38px; }
.battery { width: 83px; height: 39px; }

/* header */
.header {
  height: 168px;
  padding: 0 57px;
  display: grid;
  grid-template-columns: 1fr auto 1fr;
  align-items: center;
}
.title { grid-column: 2; margin: 0; font-size: 73px; font-weight: 700; line-height: 90px; color: var(--red); }
.filter { justify-self: end; display: flex; align-items: center; gap: 56px; }
.filter-select { appearance: none; font-size: 42px; line-height: 52px; letter-spacing: var(--tracking); }
.filter-arrow { width: 30px; height: 15px; }

/* map */
.map { position: relative; width: 100%; aspect-ratio: 1179 / 1056; overflow: hidden; }
.map-canvas { display: block; width: 100%; height: 100%; }
.ground { fill: #e8eaed; }
.green { fill: #a8dab5; }
.park-dark { fill: #9fd7ae; }
.park-light { fill: #bbe2c6; }
.sand { fill: #ecdbc3; }
.sand-light { fill: #f0e9d7; }
.shops { fill: #fdf5dd; }
.hospital { fill: #fce8e6; }
.water { fill: #9cc0f9; }
.streams, .trails, .rail { fill: none; stroke-linejoin: round; }
.streams { stroke: #9cc0f9; stroke-width: 4px; }
.trails { stroke: #f8f5ec; stroke-width: 4px; }
.rail { stroke: #d8dade; stroke-width: 5px; }
.rail .wide { stroke-width: 9px; }
.rail .yard { fill: #d8dade; stroke: none; }
.r1 { --w: 10px; }
.r2 { --w: 14px; }
.r3 { --w: 20px; }
.r1, .r2, .r3 { fill: none; stroke-width: calc(var(--w) + var(--edge)); stroke-linejoin: round; stroke-linecap: round; }
.road-edge { stroke: #d9dbdf; --edge: 4px; }
.road-core { stroke: #fff; --edge: 0px; }
.highway-edge, .highway-core, .ramp-edge, .ramp-core { fill: none; stroke-linejoin: round; stroke-linecap: round; }
.highway-edge { stroke: #f9ab0d; stroke-width: 35px; }
.highway-core { stroke: #feefc3; stroke-width: 23px; }
.ramp-edge { stroke: #f9ab0d; stroke-width: 20px; }
.ramp-core { stroke: #feefc3; stroke-width: 10px; }

.labels text { paint-order: stroke; stroke: rgba(255, 255, 255, .75); stroke-width: 20px; stroke-linejoin: round; }
.poi { font-size: 114px; }
.red { fill: #d93025; }
.slate { fill: #546e7a; }
.leaf { fill: #188038; }
.teal { fill: #0b8793; }
.district { font-size: 78px; font-weight: 500; letter-spacing: 6px; fill: #50545a; }
.city { font-size: 216px; font-weight: 500; fill: #202124; }
.town { font-size: 114px; fill: #202124; }
.shield { fill: #3b78c8; }
.labels .shield-text text { font-size: 81px; font-weight: 500; fill: #fff; stroke: none; }
.brand { font-family: Lato, sans-serif; font-size: 153px; font-weight: 700; }

.zoom { position: absolute; top: 36px; width: 72px; height: 72px; cursor: pointer; }
.zoom svg { display: block; width: 72px; height: 72px; fill: var(--red); }
.zoom .handle { stroke: var(--red); stroke-width: 10px; stroke-linecap: round; }
.zoom .minus { fill: #e8eaed; }
.zoom-out { left: 36px; }
.zoom-in { right: 36px; }
.locate {
  position: absolute;
  right: 30px;
  bottom: 30px;
  width: 168px;
  height: 168px;
  border-radius: 50%;
  background: #fff;
  box-shadow: 0 6px 12px rgba(0, 0, 0, .4);
  display: grid;
  place-items: center;
}
.locate svg { width: 66px; height: 66px; }

/* tabs */
.tabs { display: grid; grid-template-columns: 1fr 1fr; gap: 32px; padding: 33px 16px; }
.tab {
  height: 75px;
  border-radius: 38px;
  display: flex;
  align-items: center;
  justify-content: center;
  gap: 28px;
  font-size: 52px;
  line-height: 60px;
  letter-spacing: var(--tracking);
  color: var(--grey);
}
.tab-active { background: #e2e1dc; color: var(--red); font-weight: 700; }

/* login prompt */
.prompt {
  flex: 1;
  padding: 0 40px;
  display: flex;
  flex-direction: column;
  align-items: center;
  justify-content: center;
  gap: 77px;
}
.prompt-text { margin: 0; font-size: 72px; font-weight: 700; line-height: 102px; letter-spacing: var(--tracking); text-align: center; }
.login {
  padding: 46px 119px;
  border-radius: 76px;
  background: var(--red);
  color: #fff;
  font-size: 52px;
  font-weight: 500;
  line-height: 60px;
  box-shadow: 0 14px 28px rgba(0, 0, 0, .3);
}

/* bottom navigation */
.bottom { padding-bottom: 24px; box-shadow: 0 -2px 10px rgba(0, 0, 0, .06); }
.nav { display: grid; grid-template-columns: repeat(5, 1fr); height: 170px; }
.nav-item {
  display: flex;
  flex-direction: column;
  align-items: center;
  justify-content: center;
  gap: 4px;
  color: var(--grey);
  text-decoration: none;
}
.nav-active { padding-top: 10px; color: var(--red); font-size: 38px; font-weight: 600; line-height: 40px; letter-spacing: var(--tracking); }
.home-indicator { width: 420px; height: 15px; margin: 81px auto 0; border-radius: 8px; background: #000; }
```
